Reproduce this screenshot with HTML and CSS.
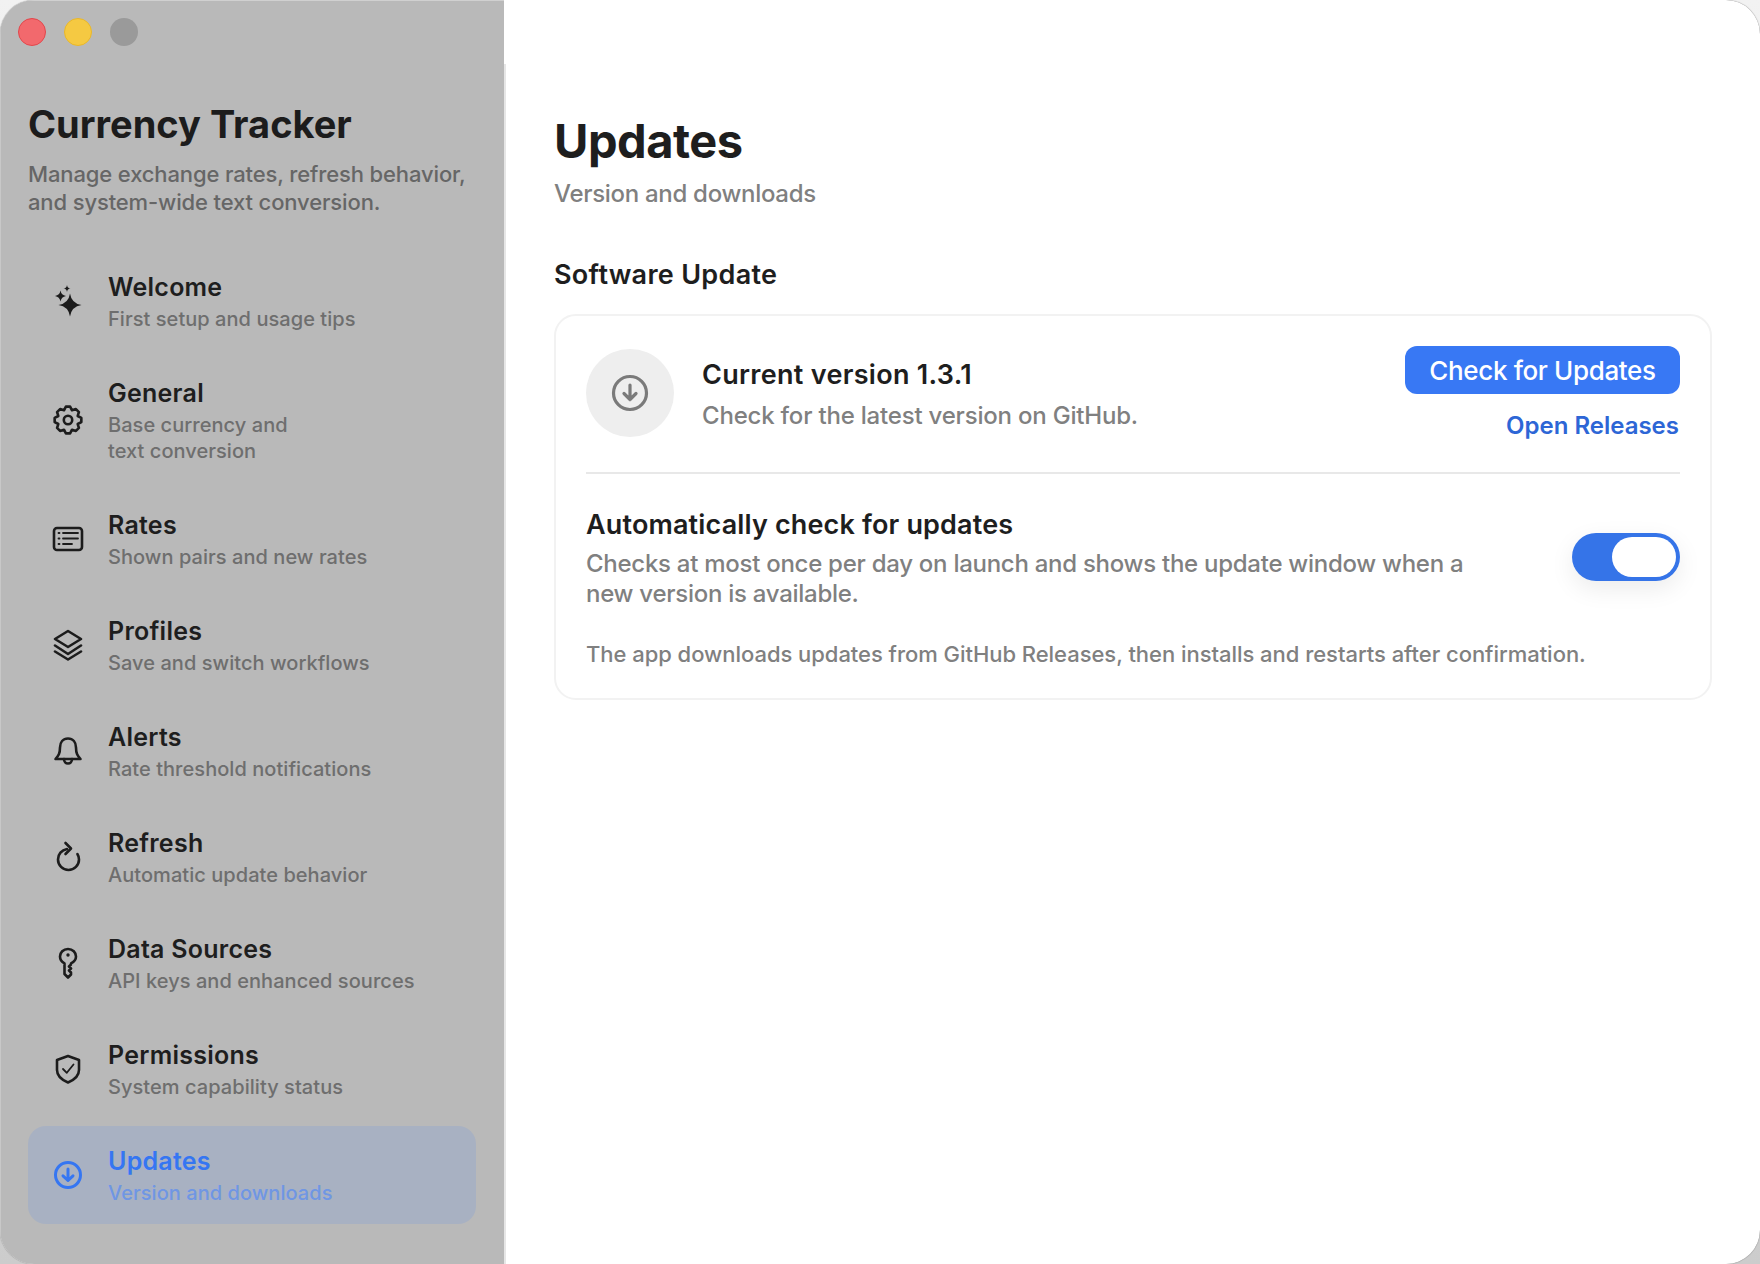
FILE: index.html
```html
<!DOCTYPE html>
<html lang="en">
<head>
    <meta charset="UTF-8">
    <meta name="viewport" content="width=device-width, initial-scale=1.0">
    <title>Currency Tracker - Updates</title>
    <link rel="stylesheet" href="styles.css">
</head>
<body>
    <div class="window">
        <aside class="sidebar">
            <div class="traffic-lights">
                <span class="light light-red"></span>
                <span class="light light-yellow"></span>
                <span class="light light-gray"></span>
            </div>
            <h1 class="app-title">Currency Tracker</h1>
            <p class="app-desc">Manage exchange rates, refresh behavior, and system-wide text conversion.</p>
            <nav class="nav">
                <a class="nav-item">
                    <svg class="nav-icon" viewBox="0 0 32 32"><path class="solid" d="M18 8.500Q19.500 18.500 29.500 20 19.500 21.500 18 31.500 16.500 21.500 6.500 20 16.500 18.500 18 8.500ZM8.500 5.500Q9.300 10.200 14 11 9.300 11.800 8.500 16.500 7.700 11.800 3 11 7.700 10.200 8.500 5.500ZM15 0Q15.400 3.100 18.500 3.500 15.400 3.900 15 7 14.600 3.900 11.500 3.500 14.600 3.100 15 0Z"/></svg>
                    <span class="nav-text"><span class="nav-title">Welcome</span><span class="nav-sub">First setup and usage tips</span></span>
                </a>
                <a class="nav-item">
                    <svg class="nav-icon" viewBox="0 0 32 32"><circle cx="16" cy="16" r="4.200"/><polygon points="29.33,13.89 29.33,18.11 25.7,20.02 26.92,23.94 23.94,26.92 20.02,25.7 18.11,29.33 13.89,29.33 11.98,25.7 8.06,26.92 5.08,23.94 6.3,20.02 2.67,18.11 2.67,13.89 6.3,11.98 5.08,8.06 8.06,5.08 11.98,6.3 13.89,2.67 18.11,2.67 20.02,6.3 23.94,5.08 26.92,8.06 25.7,11.98"/></svg>
                    <span class="nav-text"><span class="nav-title">General</span><span class="nav-sub">Base currency and<br>text conversion</span></span>
                </a>
                <a class="nav-item">
                    <svg class="nav-icon" viewBox="0 0 32 32"><rect x="2" y="5" width="28" height="22" rx="3"/><path class="thin" d="M11 10h15M11 15.500h15M11 21h9M6.500 10h1M6.500 15.500h1M6.500 21h1"/></svg>
                    <span class="nav-text"><span class="nav-title">Rates</span><span class="nav-sub">Shown pairs and new rates</span></span>
                </a>
                <a class="nav-item">
                    <svg class="nav-icon" viewBox="0 0 32 32"><path d="M16 2 29 10 16 18 3 10z"/><path d="M3 16.500 16 25 29 16.500M3 22.500 16 30.500 29 22.500"/></svg>
                    <span class="nav-text"><span class="nav-title">Profiles</span><span class="nav-sub">Save and switch workflows</span></span>
                </a>
                <a class="nav-item">
                    <svg class="nav-icon" viewBox="0 0 32 32"><path d="M16 3.500c-5 0-8 3.800-8 9 0 6-1.500 8-4.500 11.500h25c-3-3.500-4.500-5.500-4.500-11.500 0-5.200-3-9-8-9z"/><path d="M12 24c0 2.800 1.800 4.500 4 4.500s4-1.700 4-4.500"/></svg>
                    <span class="nav-text"><span class="nav-title">Alerts</span><span class="nav-sub">Rate threshold notifications</span></span>
                </a>
                <a class="nav-item">
                    <svg class="nav-icon" viewBox="0 0 32 32"><path d="M15 8C9.500 9 6 13.300 6 18.500 6 24.300 10.700 29 16.500 29S27 24.300 27 18.500c0-2-.6-3.900-1.600-5.500"/><path d="M13.500 2 19 7.500 13.500 13"/></svg>
                    <span class="nav-text"><span class="nav-title">Refresh</span><span class="nav-sub">Automatic update behavior</span></span>
                </a>
                <a class="nav-item">
                    <svg class="nav-icon" viewBox="0 0 32 32"><path d="M16 2c-4.700 0-8 3.400-8 7.600 0 3 1.600 5.400 4.500 6.800V27l3.500 3.500 3-3v-2l-2-2 2-2-2-2 2-2v-1.100c2.900-1.400 5-3.800 5-6.800C24 5.400 20.700 2 16 2z"/><circle class="solid" cx="16" cy="8" r="1.700"/></svg>
                    <span class="nav-text"><span class="nav-title">Data Sources</span><span class="nav-sub">API keys and enhanced sources</span></span>
                </a>
                <a class="nav-item">
                    <svg class="nav-icon" viewBox="0 0 32 32"><path d="M16 3 27 7v10c0 6-5 10-11 12.500C10 27 5 23 5 17V7z"/><path class="thin" d="M11 16l3.800 3.800L21.500 11.500"/></svg>
                    <span class="nav-text"><span class="nav-title">Permissions</span><span class="nav-sub">System capability status</span></span>
                </a>
                <a class="nav-item active">
                    <svg class="nav-icon" viewBox="0 0 32 32"><circle cx="16" cy="16" r="12.500"/><path d="M16 10v11.500M11 16.800 16 21.500l5-4.700"/></svg>
                    <span class="nav-text"><span class="nav-title">Updates</span><span class="nav-sub">Version and downloads</span></span>
                </a>
            </nav>
        </aside>
        <main class="main">
            <h2 class="page-title">Updates</h2>
            <p class="page-sub">Version and downloads</p>
            <h3 class="section-title">Software Update</h3>
            <section class="card">
                <div class="version-row">
                    <div class="version-badge">
                        <svg class="badge-icon" viewBox="0 0 38 38"><circle cx="19" cy="19" r="16.500"/><path d="M19 11v14.500M13 19.500l6 6 6-6"/></svg>
                    </div>
                    <div class="version-text">
                        <div class="version-title">Current version 1.3.1</div>
                        <div class="version-sub">Check for the latest version on GitHub.</div>
                    </div>
                    <div class="version-actions">
                        <button class="btn-primary" type="button">Check for Updates</button>
                        <a class="link">Open Releases</a>
                    </div>
                </div>
                <div class="auto-row">
                    <div class="auto-text">
                        <div class="auto-title">Automatically check for updates</div>
                        <div class="auto-desc">Checks at most once per day on launch and shows the update window when a new version is available.</div>
                    </div>
                    <div class="toggle"><span class="knob"></span></div>
                </div>
                <p class="note">The app downloads updates from GitHub Releases, then installs and restarts after confirmation.</p>
            </section>
        </main>
    </div>
</body>
</html>
```

FILE: styles.css
```css
* {
    box-sizing: border-box;
}
html, body {
    height: 100%;
}
body {
    margin: 0;
    overflow: hidden;
    font-family: Inter, "Noto Sans", sans-serif;
    background: linear-gradient(#f2f2f2, #cccccc);
}
.window {
    display: flex;
    width: 1760px;
    height: 1264px;
    border-radius: 34px;
    overflow: hidden;
    background-color: #ffffff;
    box-shadow: 0 0 1px rgba(0, 0, 0, 0.6);
}
.sidebar {
    width: 504px;
    flex-shrink: 0;
    padding: 18px 28px 0;
    background-color: #b9b9b9;
    box-shadow: inset 0 1px 0 #d0d0d0, inset 1px 0 0 #c8c8c8;
}
.traffic-lights {
    display: flex;
    gap: 18px;
    margin-left: -10px;
}
.light {
    width: 28px;
    height: 28px;
    border-radius: 50%;
    border: 1px solid transparent;
}
.light-red {
    background-color: #f2696d;
    border-color: #e2474c;
}
.light-yellow {
    background-color: #f5c942;
    border-color: #e9b72a;
}
.light-gray {
    background-color: #9a9a9a;
}
.app-title {
    margin: 55px 0 0;
    font-size: 38px;
    line-height: 46px;
    font-weight: 700;
    color: #1c1c1c;
}
.app-desc {
    margin: 13px 0 0;
    font-size: 22px;
    line-height: 28px;
    font-weight: 500;
    letter-spacing: -0.13px;
    color: #666666;
}
.nav {
    display: flex;
    flex-direction: column;
    gap: 8px;
    margin-top: 36px;
}
.nav-item {
    display: flex;
    align-items: center;
    gap: 24px;
    padding: 19px 24px 18px;
    border-radius: 18px;
}
.nav-item.active {
    background-color: #a8b1c2;
}
.nav-icon {
    width: 32px;
    height: 32px;
    flex-shrink: 0;
    margin-top: -1px;
    fill: none;
    stroke: #1c1c1c;
    stroke-width: 2.6;
    stroke-linecap: round;
    stroke-linejoin: round;
}
.nav-icon .solid {
    fill: #1c1c1c;
    stroke: none;
}
.nav-icon .thin {
    stroke-width: 1.8;
}
.nav-text {
    display: flex;
    flex-direction: column;
}
.nav-title {
    font-size: 25px;
    line-height: 32px;
    font-weight: 600;
    letter-spacing: 0.25px;
    color: #1e1e1e;
}
.nav-sub {
    margin-top: 3px;
    font-size: 20px;
    line-height: 26px;
    font-weight: 500;
    letter-spacing: 0.05px;
    color: #6e6e6e;
}
.active .nav-icon {
    stroke: #3576f2;
    stroke-width: 3;
}
.active .nav-title {
    color: #3576f2;
}
.active .nav-sub {
    color: #6f96e4;
}
.main {
    flex: 1;
    padding: 107px 48px 0 50px;
    background: linear-gradient(#e6e6e6, #e6e6e6) left 64px / 2px 100% no-repeat;
}
.page-title {
    margin: 0;
    font-size: 47px;
    line-height: 68px;
    font-weight: 700;
    letter-spacing: -0.5px;
    color: #1e1e1e;
}
.page-sub {
    margin: 3px 0 0;
    font-size: 24px;
    line-height: 32px;
    font-weight: 500;
    letter-spacing: -0.3px;
    color: #808080;
}
.section-title {
    margin: 48px 0 0;
    font-size: 27px;
    line-height: 34px;
    font-weight: 600;
    letter-spacing: 0.3px;
    color: #1e1e1e;
}
.card {
    margin-top: 22px;
    padding: 30px 30px 29px;
    border: 2px solid #f2f2f2;
    border-radius: 22px;
}
.version-row {
    display: flex;
    align-items: flex-start;
    padding-bottom: 30px;
    border-bottom: 2px solid #e8e8e8;
}
.version-badge {
    display: flex;
    align-items: center;
    justify-content: center;
    width: 88px;
    height: 88px;
    margin-top: 3px;
    border-radius: 50%;
    background-color: #eeeeee;
}
.badge-icon {
    width: 38px;
    height: 38px;
    fill: none;
    stroke: #7a7a7a;
    stroke-width: 3.2;
    stroke-linecap: round;
    stroke-linejoin: round;
}
.version-text {
    flex: 1;
    margin: 11px 0 0 28px;
}
.version-title {
    font-size: 27px;
    line-height: 36px;
    font-weight: 600;
    letter-spacing: 0.3px;
    color: #1e1e1e;
}
.version-sub {
    margin-top: 7px;
    font-size: 24px;
    line-height: 32px;
    font-weight: 500;
    letter-spacing: -0.2px;
    color: #808080;
}
.version-actions {
    display: flex;
    flex-direction: column;
    align-items: flex-end;
    gap: 16px;
}
.btn-primary {
    width: 275px;
    height: 48px;
    padding: 0;
    border: none;
    border-radius: 12px;
    background-color: #3878f4;
    color: #ffffff;
    font-family: inherit;
    font-size: 26px;
    font-weight: 500;
    letter-spacing: -0.35px;
    cursor: pointer;
}
.link {
    padding-right: 1px;
    font-size: 24px;
    line-height: 32px;
    font-weight: 600;
    color: #2d66d6;
}
.auto-row {
    display: flex;
    align-items: center;
    justify-content: space-between;
    margin-top: 33px;
}
.auto-text {
    width: 900px;
}
.auto-title {
    font-size: 27px;
    line-height: 36px;
    font-weight: 600;
    letter-spacing: 0.15px;
    color: #1e1e1e;
}
.auto-desc {
    margin-top: 6px;
    font-size: 24px;
    line-height: 30px;
    font-weight: 500;
    letter-spacing: -0.27px;
    color: #808080;
}
.toggle {
    display: flex;
    justify-content: flex-end;
    align-items: center;
    width: 108px;
    height: 48px;
    margin-bottom: 2px;
    padding-right: 4px;
    border-radius: 24px;
    background-color: #3574e8;
    box-shadow: 0 8px 24px rgba(0, 0, 0, 0.08);
}
.knob {
    width: 64px;
    height: 40px;
    border-radius: 20px;
    background-color: #ffffff;
}
.note {
    margin: 30px 0 0;
    font-size: 22px;
    line-height: 30px;
    font-weight: 500;
    letter-spacing: -0.04px;
    color: #808080;
}
```
